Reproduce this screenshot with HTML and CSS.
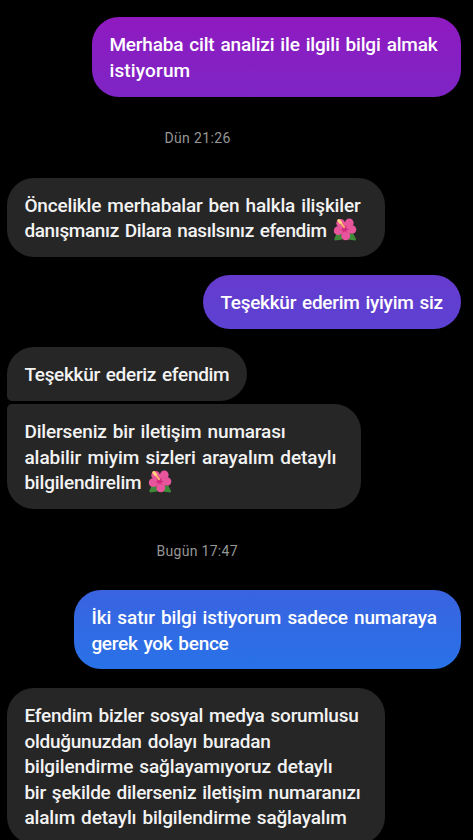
FILE: index.html
```html
<!DOCTYPE html>
<html lang="tr">
<head>
<meta charset="utf-8">
<title>Sohbet</title>
<link rel="stylesheet" href="styles.css">
</head>
<body>
<svg class="defs" aria-hidden="true">
  <symbol id="hibiscus" viewBox="0 0 24 23">
    <path fill="#3f8a38" d="M2 22.500 1.200 21 3.500 16 8 15l1.500 6.500zM22.500 22.500l.5-1.500-2.500-5L16 15l-1.500 6.500z"/>
    <g fill="#e8559d">
      <circle cx="7.600" cy="5.300" r="4.300"/>
      <circle cx="16.300" cy="4.900" r="4.300"/>
      <circle cx="19" cy="11.500" r="4.300"/>
      <circle cx="12.700" cy="17.700" r="4.500"/>
      <circle cx="5.200" cy="12.700" r="4.400"/>
      <circle cx="12" cy="10.500" r="6.500"/>
    </g>
    <path fill="#cf2a7c" d="m9 9 2.600.5 2-2-.4 2.900 3 1-3 .9.6 2.700-2.200-2-1.800 2.300.1-2.900-2.700.1 2.200-1.600z"/>
    <path fill="none" stroke="#f8b366" stroke-width="2" stroke-linecap="round" d="m7 3.500 4 5.800"/>
    <path fill="none" stroke="#ffd27c" stroke-width="3" stroke-linecap="round" d="m5.800 2.500 1.700 2"/>
  </symbol>
</svg>
<main class="chat">
  <div class="bubble sent sent-purple">
    <div class="line t1">Merhaba cilt analizi ile ilgili bilgi almak</div>
    <div class="line t2">istiyorum</div>
  </div>
  <time class="stamp stamp-first">Dün 21:26</time>
  <div class="bubble received wide">
    <div class="line t3">Öncelikle merhabalar ben halkla ilişkiler</div>
    <div class="line"><span class="t4">danışmanız Dilara nasılsınız efendim</span><svg class="flower"><use href="#hibiscus"/></svg></div>
  </div>
  <div class="bubble sent sent-violet">
    <div class="line t5">Teşekkür ederim iyiyim siz</div>
  </div>
  <div class="bubble received group-start">
    <div class="line t6">Teşekkür ederiz efendim</div>
  </div>
  <div class="bubble received group-end">
    <div class="line t7">Dilerseniz bir iletişim numarası</div>
    <div class="line t8">alabilir miyim sizleri arayalım detaylı</div>
    <div class="line"><span class="t9">bilgilendirelim</span><svg class="flower"><use href="#hibiscus"/></svg></div>
  </div>
  <time class="stamp stamp-second">Bugün 17:47</time>
  <div class="bubble sent sent-blue">
    <div class="line t10">İki satır bilgi istiyorum sadece numaraya</div>
    <div class="line t11">gerek yok bence</div>
  </div>
  <div class="bubble received wide">
    <div class="line t12">Efendim bizler sosyal medya sorumlusu</div>
    <div class="line t13">olduğunuzdan dolayı buradan</div>
    <div class="line t14">bilgilendirme sağlayamıyoruz detaylı</div>
    <div class="line t15">bir şekilde dilerseniz iletişim numaranızı</div>
    <div class="line t16">alalım detaylı bilgilendirme sağlayalım</div>
  </div>
</main>
</body>
</html>
```
FILE: styles.css
```css
* { box-sizing: border-box; }
html, body { margin: 0; height: 840px; overflow: hidden; background: #000; }
.defs { display: none; }

.chat {
  display: flex;
  flex-direction: column;
  height: 840px;
  overflow: hidden;
  padding: 17px 12px 0 7px;
  font-family: Roboto, "Liberation Sans", sans-serif;
}

.bubble {
  flex: none;
  padding: 15.3px 17px 12.8px 17.4px;
  border-radius: 27px;
  color: #f3f3f3;
  font-size: 19px;
  font-weight: 500;
  line-height: 25.6px;
  word-spacing: 1.5px;
  white-space: nowrap;
}
.line { height: 25.6px; }

.received { align-self: flex-start; background: #262626; }
.sent { align-self: flex-end; color: #fff; }
.wide { width: 378px; }

.sent-purple { width: 369px; height: 79.5px; background: linear-gradient(#8f1ac0, #7e25c5); }
.sent-violet { width: 258px; height: 54px; margin: 18px 0; background: linear-gradient(#663bce, #5c42d3); }
.sent-blue { width: 387px; height: 79.5px; margin-bottom: 18.4px; background: linear-gradient(#3a63e0, #2872e8); }

.group-start { width: 240px; height: 54px; margin-bottom: 3px; border-bottom-left-radius: 5px; }
.group-end { width: 354px; height: 105px; border-top-left-radius: 5px; }

.stamp {
  flex: none;
  height: 81px;
  color: #969696;
  font-size: 14px;
  line-height: 83px;
}
.stamp-first { padding-left: 157.5px; letter-spacing: .35px; }
.stamp-second { padding-left: 149.5px; letter-spacing: .3px; line-height: 84px; }

.flower { width: 24px; height: 23px; margin-left: 6.5px; vertical-align: -4px; }

/* Per-line tracking */
.t1 { letter-spacing: -.19px; }
.t2 { letter-spacing: .15px; }
.t3 { letter-spacing: -.17px; }
.t4 { letter-spacing: -.37px; }
.t5 { letter-spacing: -.28px; }
.t6 { letter-spacing: -.31px; }
.t7 { letter-spacing: -.16px; }
.t8 { letter-spacing: -.05px; }
.t9 { letter-spacing: -.2px; }
.t10 { letter-spacing: -.1px; }
.t11 { letter-spacing: -.29px; }
.t12 { letter-spacing: -.245px; }
.t13 { letter-spacing: -.25px; }
.t14 { letter-spacing: -.13px; }
.t15 { letter-spacing: -.25px; }
.t16 { letter-spacing: -.17px; }
```
